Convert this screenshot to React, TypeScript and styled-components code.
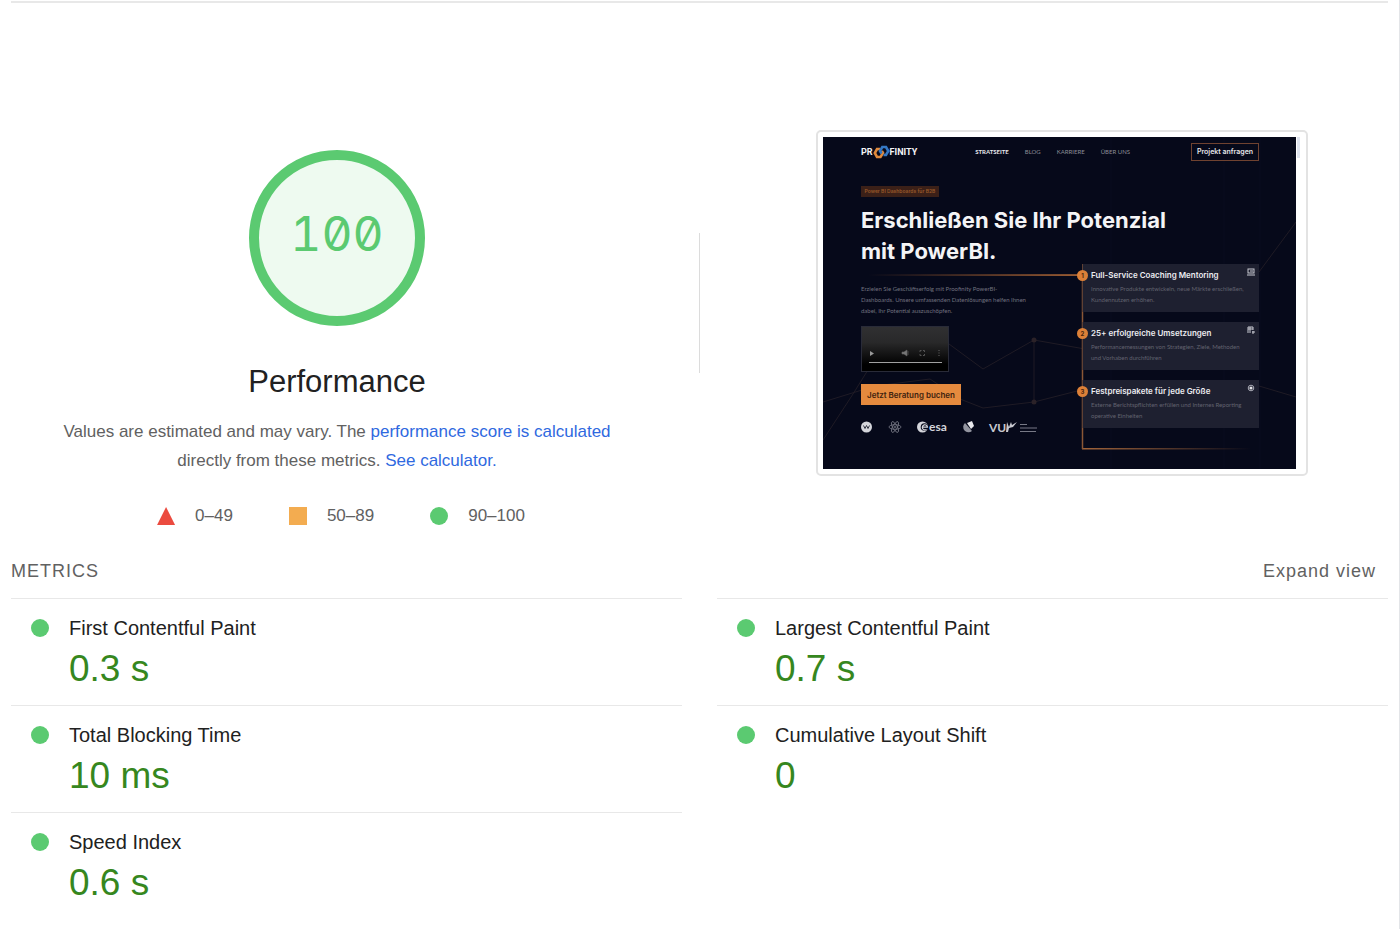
import React from "react";
import styled, { createGlobalStyle } from "styled-components";

const GlobalStyle = createGlobalStyle`
  *, *::before, *::after { box-sizing: border-box; }
  body {
    margin: 0;
    background: #fff;
    color: #212121;
    font-family: "Liberation Sans", Arial, sans-serif;
  }
  h1, h2, h3, p, ul, dl, dd { margin: 0; padding: 0; font-weight: 400; }
  ul { list-style: none; }
`;

const Page = styled.main`
  min-height: 100vh;
  padding: 1px 11px 0;
  border-right: 1px solid #e3e5e8;
`;

const Summary = styled.section`
  display: grid;
  grid-template-columns: 1fr 73px 1fr;
  border-top: 2px solid #e8e8e8;
`;

const ScorePanel = styled.div`
  display: flex;
  flex-direction: column;
  align-items: center;
  padding: 147px 32px 0;
`;

const Gauge = styled.div`
  display: flex;
  align-items: center;
  justify-content: center;
  width: 176px;
  height: 176px;
  padding-bottom: 8px;
  border: 10px solid #5bca71;
  border-radius: 50%;
  background: #eefaf0;
  color: #5bca71;
  font: 400 48px/60px Inter, sans-serif;
  font-feature-settings: "zero", "tnum";
`;

const Title = styled.h1`
  margin-top: 36px;
  font-size: 31px;
  line-height: 40px;
`;

const Description = styled.p`
  margin-top: 15px;
  color: #616161;
  font-size: 17px;
  line-height: 29px;
  text-align: center;
`;

const Link = styled.a`
  color: #2f69e0;
  text-decoration: none;
`;

const Legend = styled.ul`
  display: flex;
  gap: 56px;
  margin-top: 29px;
  padding-left: 8px;
`;

const LegendItem = styled.li`
  display: flex;
  align-items: center;
  gap: 20px;
  color: #616161;
  font-size: 17px;
  line-height: 24px;
`;

type Level = "fail" | "average" | "pass";

const levelColor: Record<Level, string> = {
  fail: "#eb4b3f",
  average: "#f3ac50",
  pass: "#5bca71",
};

const Marker = styled.span<{ $level: Level }>`
  flex: none;
  width: 18px;
  height: 18px;
  background: ${(p) => levelColor[p.$level]};
  border-radius: ${(p) => (p.$level === "pass" ? "50%" : "0")};
  clip-path: ${(p) => (p.$level === "fail" ? "polygon(50% 0, 100% 100%, 0 100%)" : "none")};
`;

const Separator = styled.div`
  justify-self: center;
  width: 1px;
  height: 140px;
  margin-top: 230px;
  background: #dcdcdc;
`;

const PreviewPanel = styled.div`
  display: flex;
  justify-content: center;
  align-items: flex-start;
  padding-top: 127px;
`;

const PreviewFrame = styled.div`
  display: flex;
  width: 492px;
  padding: 5px;
  border: 2px solid #e3e3e3;
  border-radius: 5px;
`;

const ScrollThumb = styled.div`
  width: 3px;
  height: 21px;
  margin-left: 1px;
  background: #dfe4ee;
`;

const Site = styled.div`
  position: relative;
  flex: none;
  width: 473px;
  height: 332px;
  padding: 6px 37px 0 38px;
  overflow: hidden;
  background: #06091a;
  color: #f4f4f6;
  font-family: Inter, sans-serif;
  white-space: nowrap;
`;

const Backdrop = styled.svg`
  position: absolute;
  inset: 0;
`;

const SiteHeader = styled.div`
  position: relative;
  display: flex;
  align-items: center;
  height: 18px;
`;

const Brand = styled.div`
  display: flex;
  align-items: center;
  font: 700 9px/12px Roboto, sans-serif;
`;

const SiteNav = styled.nav`
  display: flex;
  gap: 16px;
  margin: 0 61px 0 auto;
`;

const NavLink = styled.a<{ $active?: boolean }>`
  color: ${(p) => (p.$active ? "#e8e8ec" : "#8c8d97")};
  font-family: Lato, sans-serif;
  font-size: 6px;
  font-weight: ${(p) => (p.$active ? 700 : 400)};
  line-height: 8px;
  text-decoration: none;
`;

const OutlineButton = styled.button`
  width: 68px;
  height: 18px;
  padding: 0;
  border: 1px solid #6f4230;
  background: transparent;
  color: #e6e6ea;
  font: 600 7px/10px Inter, sans-serif;
`;

const Tag = styled.div`
  position: relative;
  width: 78px;
  height: 11px;
  margin-top: 25px;
  background: #3b2018;
  color: #98582a;
  font-size: 5px;
  font-weight: 600;
  line-height: 11px;
  text-align: center;
`;

const Headline = styled.h2`
  position: relative;
  margin: 8px 0 -3px;
  font: 700 22px/31px Inter, sans-serif;
`;

const SiteBody = styled.div`
  position: relative;
  display: flex;
  justify-content: space-between;
`;

const Intro = styled.div`
  padding-top: 19px;
`;

const SmallText = styled.p<{ $tone: string }>`
  color: ${(p) => p.$tone};
  font-family: Lato, sans-serif;
  font-size: 6px;
  line-height: 11px;
`;

const Video = styled.svg`
  display: block;
  margin: 10px 0 12px;
`;

const SolidButton = styled.button`
  display: block;
  width: 100px;
  height: 21px;
  padding: 0;
  border: 0;
  background: #e58a3e;
  color: #40220f;
  font: 600 8px/12px Inter, sans-serif;
`;

const Partners = styled.svg`
  display: block;
  margin-top: 14px;
`;

const Cards = styled.div`
  display: flex;
  flex-direction: column;
  gap: 10px;
  width: 177px;
`;

const Card = styled.div`
  position: relative;
  height: 48px;
  padding: 4px 4px 0 8px;
  border-left: 1px solid #5f4134;
  background: #1e2030;
`;

const CardHead = styled.div`
  display: flex;
  justify-content: space-between;
  height: 15px;
`;

const CardTitle = styled.h3`
  color: #ececf0;
  font: 600 8px/15px Inter, sans-serif;
`;

const Bullet = styled.span`
  position: absolute;
  top: 6px;
  left: -6px;
  width: 11px;
  height: 11px;
  border-radius: 50%;
  background: #dc8038;
  color: #4a260e;
  font-size: 6px;
  font-weight: 700;
  line-height: 11px;
  text-align: center;
`;

const MetricsHeader = styled.div`
  display: flex;
  justify-content: space-between;
  margin-top: 31px;
  padding-right: 12px;
  color: #616161;
  font-size: 18px;
  line-height: 24px;
  letter-spacing: 1px;
`;

const MetricsTitle = styled.h2`
  font-size: 18px;
  text-transform: uppercase;
`;

const ExpandButton = styled.button`
  padding: 0;
  border: 0;
  background: none;
  color: inherit;
  font: inherit;
  letter-spacing: inherit;
  cursor: pointer;
`;

const MetricGrid = styled.div`
  display: grid;
  grid-template-columns: 1fr 1fr;
  column-gap: 35px;
  margin-top: 15px;
`;

const Metric = styled.dl`
  display: grid;
  grid-template-columns: 18px 1fr;
  column-gap: 20px;
  align-items: center;
  padding: 16px 20px 8px;
  border-top: 1px solid #e8e8e8;
`;

const MetricName = styled.dt`
  font-size: 20px;
  line-height: 26px;
`;

const MetricValue = styled.dd`
  grid-column: 2;
  color: #36871e;
  font-size: 37px;
  line-height: 56px;
`;

const metrics = [
  ["First Contentful Paint", "0.3 s"],
  ["Largest Contentful Paint", "0.7 s"],
  ["Total Blocking Time", "10 ms"],
  ["Cumulative Layout Shift", "0"],
  ["Speed Index", "0.6 s"],
];

const cards = [
  {
    title: "Full-Service Coaching Mentoring",
    lines: ["Innovative Produkte entwickeln, neue Märkte erschließen,", "Kundennutzen erhöhen."],
    icon: (
      <g fill="none" stroke="#c9cad2">
        <rect x="1" y="1" width="6" height="4" />
        <path d="M0 7h8M3 3h3" />
      </g>
    ),
  },
  {
    title: "25+ erfolgreiche Umsetzungen",
    lines: ["Performancemessungen von Strategien, Ziele, Methoden", "und Vorhaben durchführen"],
    icon: (
      <g fill="none" stroke="#c9cad2">
        <path d="M1 7V1h5v3M1 3h5M3 1v6M5 6h3M6 5v3" />
      </g>
    ),
  },
  {
    title: "Festpreispakete für jede Größe",
    lines: ["Externe Berichtspflichten erfüllen und Internes Reporting", "operative Einheiten"],
    icon: (
      <g>
        <circle cx="4" cy="4" r="2.8" fill="none" stroke="#a9aab5" />
        <circle cx="4" cy="4" r="1.6" fill="#e6e6ea" />
      </g>
    ),
  },
];

function SiteBackdrop() {
  return (
    <Backdrop width="473" height="332" viewBox="0 0 473 332" fill="none" aria-hidden="true">
      <defs>
        <linearGradient id="lead" x1="45" x2="259" y1="0" y2="0" gradientUnits="userSpaceOnUse">
          <stop stopColor="#b4672f" stopOpacity="0" />
          <stop offset="1" stopColor="#c4733a" />
        </linearGradient>
        <linearGradient id="tail" x1="259" x2="428" y1="0" y2="0" gradientUnits="userSpaceOnUse">
          <stop stopColor="#a3653a" />
          <stop offset="1" stopColor="#a3653a" stopOpacity="0" />
        </linearGradient>
      </defs>
      <g stroke="#090d1e">
        <path d="M288 0V332M401 0V332M437 0V332" />
      </g>
      <g stroke="#1f1b25">
        <path d="M0 265L52 249L107 242L137 262L160 271L211 265L262 252" />
        <path d="M0 303L30 257L48 228M126 207L160 232L211 203L262 212M211 203V265" />
        <path d="M436 135L473 85M436 249L473 260" />
      </g>
      <g fill="#2b2228">
        <circle cx="211" cy="203" r="2.5" />
        <circle cx="211" cy="265" r="2.5" />
      </g>
      <rect x="45" y="137.3" width="214" height="1.5" fill="url(#lead)" />
      <rect x="259" y="311" width="169" height="1.5" fill="url(#tail)" />
      <path d="M259.5 138V312" stroke="#8a5735" strokeWidth="1.5" />
    </Backdrop>
  );
}

function BrandMark() {
  return (
    <svg width="17" height="14" viewBox="0 0 17 13" fill="none" aria-hidden="true">
      <path d="M7 3.500H4L1.800 7.500L4 11.500H7.500L10 7.500L8.800 5.500" stroke="#e08a3c" strokeWidth="2.600" />
      <path d="M8.500 8L7 5.500L9.300 1.500H13L15.300 5.500L13 9.500H10.500" stroke="#3478c4" strokeWidth="2.600" />
    </svg>
  );
}

function SitePreview() {
  return (
    <Site>
      <SiteBackdrop />
      <SiteHeader>
        <Brand>
          PR
          <BrandMark />
          FINITY
        </Brand>
        <SiteNav>
          <NavLink href="#start" $active>STRATSEITE</NavLink>
          <NavLink href="#blog">BLOG</NavLink>
          <NavLink href="#karriere">KARRIERE</NavLink>
          <NavLink href="#about">ÜBER UNS</NavLink>
        </SiteNav>
        <OutlineButton type="button">Projekt anfragen</OutlineButton>
      </SiteHeader>
      <Tag>Power BI Dashboards für B2B</Tag>
      <Headline>
        Erschließen Sie Ihr Potenzial
        <br />
        mit PowerBI.
      </Headline>
      <SiteBody>
        <Intro>
          <SmallText $tone="#70717e">
            Erzielen Sie Geschäftserfolg mit Proofinity PowerBI-
            <br />
            Dashboards. Unsere umfassenden Datenlösungen helfen Ihnen
            <br />
            dabei, Ihr Potential auszuschöpfen.
          </SmallText>
          <Video width="88" height="46" viewBox="0 0 88 46" aria-hidden="true">
            <defs>
              <linearGradient id="video" x1="0" x2="0" y1="0" y2="1">
                <stop stopColor="#303032" />
                <stop offset="0.35" stopColor="#29292a" />
                <stop offset="0.85" stopColor="#000" />
              </linearGradient>
            </defs>
            <rect x="0.5" y="0.5" width="87" height="45" fill="url(#video)" stroke="#292b38" />
            <path d="M9 25l4 2.500l-4 2.500z" fill="#999" />
            <path d="M41 26h2l3-2v6l-3-2h-2zM47 25v4" fill="#777" stroke="#666" strokeWidth="0.6" />
            <path d="M59 26v-1.500h1.500M62 24.500h1.500V26M63.500 28v1.500H62M60.500 29.500H59V28" fill="none" stroke="#555" />
            <path d="M78 24v1M78 26.500v1M78 29v1" stroke="#666" />
            <path d="M8 36.500h73" stroke="#a0a0a0" />
          </Video>
          <SolidButton type="button">Jetzt Beratung buchen</SolidButton>
          <Partners width="178" height="16" viewBox="0 0 178 16" fontFamily="Lato, sans-serif" fontWeight="700" role="img" aria-label="Partner">
            <circle cx="5.500" cy="8" r="5.500" fill="#d4d5db" />
            <path d="M2.500 6.500l1.500 3l1.500-3l1.500 3l1.500-3" fill="none" stroke="#303341" />
            <g fill="none" stroke="#777986" strokeWidth="0.800">
              <ellipse cx="34" cy="8" rx="6" ry="2.300" />
              <ellipse cx="34" cy="8" rx="6" ry="2.300" transform="rotate(60 34 8)" />
              <ellipse cx="34" cy="8" rx="6" ry="2.300" transform="rotate(120 34 8)" />
              <circle cx="34" cy="8" r="0.8" />
            </g>
            <circle cx="61.500" cy="8" r="5.500" fill="#d4d5db" />
            <circle cx="63.500" cy="8" r="3.800" fill="#06091a" />
            <path d="M61 8.200h5.500a2.600 2.600 0 1 0-1 2.200" fill="none" stroke="#d4d5db" strokeWidth="1.200" />
            <text x="68" y="12" fontSize="12" fill="#d4d5db">esa</text>
            <path d="M104 4a5 5 0 1 0 7 8z" fill="#92949f" />
            <path d="M106 4l5-2l2 5l-3 3z" fill="#e8e8ec" />
            <text x="128" y="13" fontSize="12" fill="#c7c8cf">VU</text>
            <path d="M146 3l2 5l2-5l1 3l5-3l-4 5l-4 1l-1 4h-2z" fill="#c7c8cf" />
            <path d="M159 5.500h7M159 9h17M159 12.500h16" stroke="#777986" />
          </Partners>
        </Intro>
        <Cards>
          {cards.map((card, index) => (
            <Card key={card.title}>
              <Bullet>{index + 1}</Bullet>
              <CardHead>
                <CardTitle>{card.title}</CardTitle>
                <svg width="8" height="8" viewBox="0 0 8 8" aria-hidden="true">
                  {card.icon}
                </svg>
              </CardHead>
              <SmallText $tone="#62636f">
                {card.lines[0]}
                <br />
                {card.lines[1]}
              </SmallText>
            </Card>
          ))}
        </Cards>
      </SiteBody>
    </Site>
  );
}

export default function App() {
  return (
    <>
      <GlobalStyle />
      <Page>
        <Summary>
          <ScorePanel>
            <Gauge>100</Gauge>
            <Title>Performance</Title>
            <Description>
              Values are estimated and may vary. The{" "}
              <Link href="#scoring">performance score is calculated</Link>
              <br />
              directly from these metrics. <Link href="#calculator">See calculator.</Link>
            </Description>
            <Legend>
              <LegendItem><Marker $level="fail" />0–49</LegendItem>
              <LegendItem><Marker $level="average" />50–89</LegendItem>
              <LegendItem><Marker $level="pass" />90–100</LegendItem>
            </Legend>
          </ScorePanel>
          <Separator />
          <PreviewPanel>
            <PreviewFrame>
              <SitePreview />
              <ScrollThumb />
            </PreviewFrame>
          </PreviewPanel>
        </Summary>
        <MetricsHeader>
          <MetricsTitle>Metrics</MetricsTitle>
          <ExpandButton type="button">Expand view</ExpandButton>
        </MetricsHeader>
        <MetricGrid>
          {metrics.map(([name, value]) => (
            <Metric key={name}>
              <Marker $level="pass" />
              <MetricName>{name}</MetricName>
              <MetricValue>{value}</MetricValue>
            </Metric>
          ))}
        </MetricGrid>
      </Page>
    </>
  );
}
